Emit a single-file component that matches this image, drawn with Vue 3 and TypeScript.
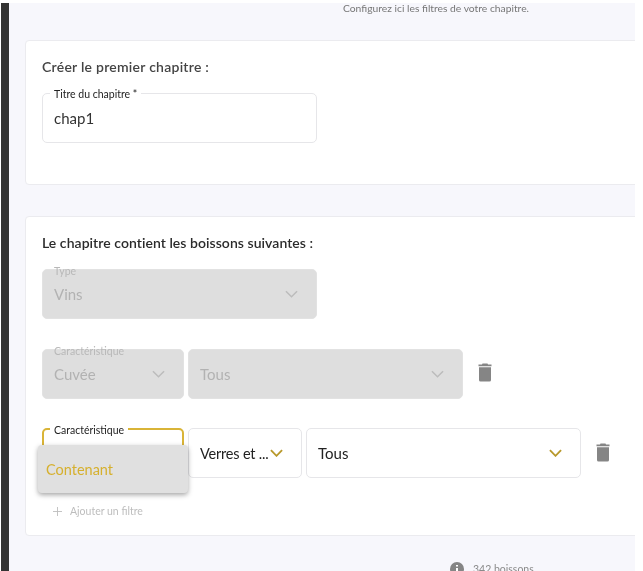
<script setup lang="ts">
interface Cell { label?: string; value: string; width: number }
const lockedRow: Cell[] = [
  { label: 'Caractéristique', value: 'Cuvée', width: 142 },
  { value: 'Tous', width: 275 },
]
</script>

<template>
  <div class="page">
    <div class="rail"></div>
    <main class="content">
      <p class="hint">Configurez ici les filtres de votre chapitre.</p>

      <section class="card first">
        <h2 class="title">Créer le premier chapitre :</h2>
        <div class="field wide">
          <span class="label">Titre du chapitre *</span>
          <span class="value">chap1</span>
        </div>
      </section>

      <section class="card second">
        <h2 class="title dark">Le chapitre contient les boissons suivantes :</h2>

        <div class="field wide locked">
          <span class="label">Type</span>
          <span class="value">Vins</span>
          <svg class="chev" viewBox="0 0 14 8"><path d="M1 1l6 6 6-6" /></svg>
        </div>

        <div class="row locked-row">
          <div v-for="c in lockedRow" :key="c.value" class="field locked" :style="{ width: c.width + 'px' }">
            <span v-if="c.label" class="label">{{ c.label }}</span>
            <span class="value">{{ c.value }}</span>
            <svg class="chev" viewBox="0 0 14 8"><path d="M1 1l6 6 6-6" /></svg>
          </div>
          <svg class="trash" viewBox="0 0 14 19">
            <path d="M4.500 0.500h5l.5 1h3.500v1.800H.5V1.500H4z" />
            <path d="M1 4.300h12V17a1.600 1.600 0 0 1-1.600 1.600H2.600A1.600 1.600 0 0 1 1 17z" />
          </svg>
        </div>

        <div class="row active-row">
          <div class="field active cat">
            <span class="label">Caractéristique</span>
          </div>
          <div class="field open verres">
            <span class="value">Verres et ...</span>
            <svg class="chev gold" viewBox="0 0 14 8"><path d="M1 1l6 6 6-6" /></svg>
          </div>
          <div class="field open tous">
            <span class="value">Tous</span>
            <svg class="chev gold" viewBox="0 0 14 8"><path d="M1 1l6 6 6-6" /></svg>
          </div>
          <svg class="trash" viewBox="0 0 14 19">
            <path d="M4.500 0.500h5l.5 1h3.500v1.800H.5V1.500H4z" />
            <path d="M1 4.300h12V17a1.600 1.600 0 0 1-1.600 1.600H2.600A1.600 1.600 0 0 1 1 17z" />
          </svg>
          <div class="menu"><span>Contenant</span></div>
        </div>

        <div class="add">
          <svg class="plus" viewBox="0 0 10 10"><path d="M5 0v10M0 5h10" /></svg>
          <span>Ajouter un filtre</span>
        </div>
      </section>

      <div class="count">
        <svg class="info" viewBox="0 0 14 14">
          <circle cx="7" cy="7" r="7" />
          <path class="info-i" d="M7 6v4.500M7 3v1.600" />
        </svg>
        <span>342 boissons</span>
      </div>
    </main>
  </div>
</template>

<style>
html, body { margin: 0; background: #fff; overflow: hidden; }
</style>

<style scoped>
.page {
  display: flex;
  box-sizing: border-box;
  width: 643px;
  height: 571px;
  padding: 3px 8px 0 1px;
  overflow: hidden;
  font-family: Lato, "Open Sans", sans-serif;
  filter: blur(0.45px);
}
.rail { flex: 0 0 8px; background: #333; }
.content {
  flex: 1;
  min-width: 0;
  background: #f7f7fc;
  padding-left: 16px;
  overflow: hidden;
}
.hint {
  margin: 0 0 0 318px;
  height: 37px;
  font-size: 10.3px;
  line-height: 11px;
  color: #777;
}
.card {
  box-sizing: border-box;
  margin-right: -2px;
  background: #fff;
  border: 1px solid #ebebef;
  border-radius: 4px 0 0 4px;
  padding-left: 16px;
}
.first { height: 145px; padding-top: 17px; margin-bottom: 31px; }
.second { height: 320px; padding-top: 17px; }
.title {
  margin: 0;
  height: 18px;
  font-size: 14px;
  line-height: 18px;
  font-weight: 600;
  letter-spacing: 0.25px;
  color: #444;
}
.title.dark { color: #2b2b2b; letter-spacing: 0.05px; }
.first .title { margin-bottom: 17px; }
.second .title { margin-bottom: 17px; }

.field {
  position: relative;
  box-sizing: border-box;
  display: flex;
  align-items: center;
  justify-content: space-between;
  height: 50px;
  padding: 0 11px;
  border: 1px solid #e6e6e9;
  border-radius: 5px;
  background: #fff;
  font-size: 15px;
  color: #222;
}
.wide { width: 275px; }
.label {
  position: absolute;
  left: 7px;
  top: -6px;
  padding: 0 4px;
  font-size: 10.5px;
  line-height: 12px;
  color: #222;
  background: #fff;
}
.first .value { color: #333; }
.locked { background: #dedede; border-color: #e2e2e2; color: #b2b2b2; }
.locked .label { color: #b8b8b8; background: transparent; top: -5px; }
.chev { width: 13px; height: 8px; flex: none; margin-right: 7px; }
.chev path { fill: none; stroke: #bcbcbc; stroke-width: 1.6; }
.chev.gold path { stroke: #b8992c; stroke-width: 2; }

.row { position: relative; display: flex; align-items: center; gap: 4px; }
.locked-row { margin-top: 30px; }
.active-row { margin-top: 29px; }
.trash { width: 14px; height: 19px; margin-left: 11px; fill: #858585; }
.locked-row .trash { margin-top: -3px; }
.active-row .trash { margin-top: -2px; }
.cat { width: 142px; border: 2px solid #d9b437; }
.cat .label { left: 6px; top: -6px; }
.verres { width: 114px; padding-right: 18px; }
.verres .chev { margin-right: 0; }
.verres .value { white-space: nowrap; font-size: 14.5px; letter-spacing: -0.2px; }
.tous { width: 275px; }
.tous .chev { margin-right: 7px; }
.menu {
  position: absolute;
  left: -4px;
  top: 17px;
  box-sizing: border-box;
  display: flex;
  align-items: center;
  width: 150px;
  height: 48px;
  padding-left: 8px;
  background: #e0e0e0;
  border-radius: 4px;
  box-shadow: 0 2px 5px rgba(0, 0, 0, 0.35);
  font-size: 14.5px;
  color: #d6b02e;
}
.add {
  display: flex;
  align-items: center;
  gap: 8px;
  margin: 26px 0 0 11px;
  font-size: 10.5px;
  line-height: 14px;
  color: #bdbdbd;
}
.plus { width: 9px; height: 9px; }
.plus path { stroke: #bdbdbd; stroke-width: 1; fill: none; }

.count {
  display: flex;
  align-items: center;
  gap: 9px;
  margin: 26px 0 0 425px;
  font-size: 10.5px;
  line-height: 14px;
  color: #8a8a8a;
  white-space: nowrap;
}
.info { width: 14px; height: 14px; fill: #858585; }
.info-i { stroke: #fff; stroke-width: 2; fill: none; }
</style>
